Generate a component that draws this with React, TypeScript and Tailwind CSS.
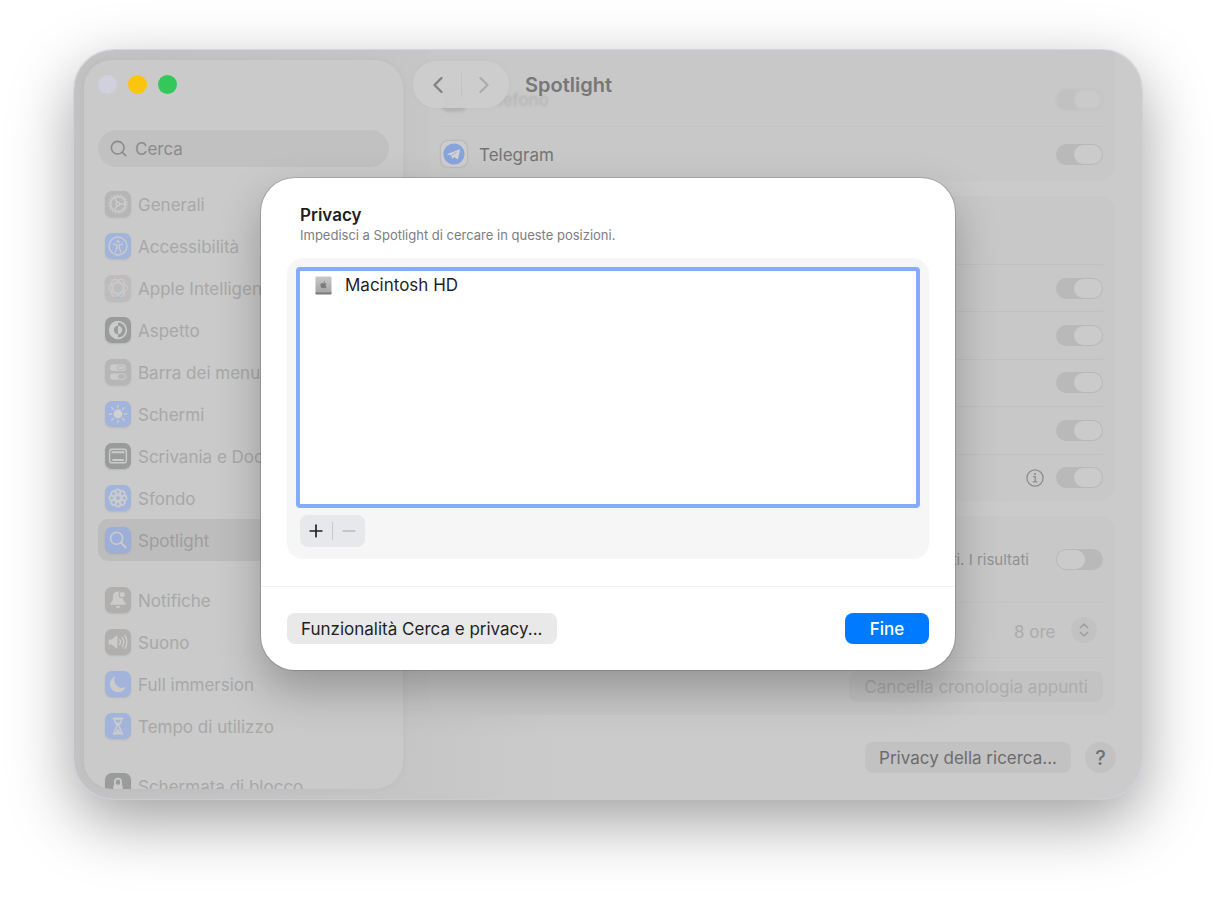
import type { ReactNode } from 'react';
import { ChevronLeft, ChevronRight, ChevronsUpDown, Minus, Plus, Search } from 'lucide-react';

interface SidebarItem {
  label: string;
  tile: string;
  icon: ReactNode;
  selected?: boolean;
}

const GRAY = 'bg-[#b6b6b6]';
const WARM = 'bg-[#b1aeae]';
const BLUE = 'bg-[#a2b4dc]';
const DARK = 'bg-[#9a9c9b]';

function Glyph({ children }: { children: ReactNode }) {
  return (
    <svg viewBox="0 0 26 26" className="h-[26px] w-[26px]" fill="none" stroke="#cbcbcb" strokeWidth="1.4" aria-hidden="true">
      {children}
    </svg>
  );
}

const petals = [0, 45, 90, 135, 180, 225, 270, 315];

const gearIcon = (
  <Glyph>
    <circle cx="13" cy="13" r="7.4" strokeWidth="1.7" />
    <circle cx="13" cy="13" r="9" strokeWidth="1.6" strokeDasharray="1.6 1.54" />
    <circle cx="13" cy="13" r="1.8" />
    <path d="M14.8 13h5.4M12.1 11.4 9.4 6.8M12.1 14.6l-2.7 4.6" />
  </Glyph>
);

const accessibilityIcon = (
  <Glyph>
    <circle cx="13" cy="13" r="9" />
    <circle cx="13" cy="8.4" r="1.5" fill="#cbcbcb" stroke="none" />
    <path d="M8.4 11.1l3.2.8v3.2l-1.5 4M17.6 11.1l-3.2.8v3.2l1.5 4M11.6 12h2.8v3h-2.8z" strokeWidth="1.2" strokeLinecap="round" />
  </Glyph>
);

const intelligenceIcon = (
  <Glyph>
    {[0, 60, 120].map((a) => (
      <ellipse key={a} cx="13" cy="13" rx="9.4" ry="5.2" transform={`rotate(${a} 13 13)`} strokeWidth="1.2" />
    ))}
    <path d="M9 22.4h8" stroke="#a6b6dc" strokeWidth="2" strokeDasharray="1.5 1" />
  </Glyph>
);

const appearanceIcon = (
  <Glyph>
    <circle cx="13" cy="13" r="8.4" strokeWidth="1.6" />
    <path d="M13 4.6a8.4 8.4 0 0 0 0 16.8v-4.2a4.2 4.2 0 0 1 0-8.4z" fill="#cbcbcb" stroke="none" />
    <path d="M13 8.8a4.2 4.2 0 0 1 0 8.4z" fill="#cbcbcb" stroke="none" />
  </Glyph>
);

const menuBarIcon = (
  <Glyph>
    <rect x="5" y="5.6" width="16" height="6.4" rx="3.2" fill="#cbcbcb" stroke="none" />
    <rect x="12.5" y="7" width="7" height="3.6" rx="1.8" fill="none" stroke="#b6b6b6" strokeWidth="1" />
    <rect x="5" y="14.4" width="16" height="6.4" rx="3.2" fill="#cbcbcb" stroke="none" />
    <rect x="13" y="15.4" width="7" height="4.4" rx="2.2" fill="#b6b6b6" stroke="none" />
  </Glyph>
);

const displayIcon = (
  <Glyph>
    <circle cx="13" cy="13" r="4.4" fill="#d0d0d0" stroke="none" />
    {petals.map((a) => (
      <path key={a} d="M13 4.2v2.6" transform={`rotate(${a} 13 13)`} strokeLinecap="round" />
    ))}
  </Glyph>
);

const desktopIcon = (
  <Glyph>
    <rect x="4.6" y="6.2" width="16.8" height="13.6" rx="2.4" />
    <path d="M6.6 9.2h12.8" strokeWidth="2" />
    <path d="M7.4 17h11.2" strokeWidth="2" />
  </Glyph>
);

const wallpaperIcon = (
  <Glyph>
    {petals.map((a) => (
      <circle key={a} cx="13" cy="6.8" r="2.4" transform={`rotate(${a} 13 13)`} strokeWidth="1.8" />
    ))}
    <circle cx="13" cy="13" r="2.6" />
  </Glyph>
);

const spotlightIcon = (
  <Glyph>
    <circle cx="11.6" cy="11.2" r="6" strokeWidth="1.6" />
    <path d="M16 15.6l4.6 4.6" strokeWidth="2" strokeLinecap="round" />
  </Glyph>
);

const bellIcon = (
  <Glyph>
    <path
      d="M13 4.6c-3.4 0-5 2.3-5 5.2 0 3.6-.8 4.8-2.4 6.4-.6.6-.3 1.6.6 1.6h13.6c.9 0 1.2-1 .6-1.6-1.6-1.6-2.4-2.8-2.4-6.4 0-2.9-1.6-5.2-5-5.2z"
      fill="#cbcbcb"
      stroke="none"
    />
    <path d="M10.8 19h4.4a2.2 2 0 0 1-4.4 0z" fill="#cbcbcb" stroke="none" />
    <circle cx="17.2" cy="7.6" r="3.2" fill="#cbcbcb" stroke="#b1aeae" strokeWidth="1.2" />
  </Glyph>
);

const speakerIcon = (
  <Glyph>
    <path d="M3.6 10.4h3.2l4.4-3.6c.6-.5 1.2-.2 1.2.6v11.2c0 .8-.6 1.1-1.2.6l-4.4-3.6H3.6z" fill="#cbcbcb" stroke="none" />
    <path d="M14.6 10.4a4.4 4.4 0 0 1 0 5.2M17.2 8.6a7.4 7.4 0 0 1 0 8.8M19.8 6.8a10.2 10.2 0 0 1 0 12.4" strokeLinecap="round" />
  </Glyph>
);

const moonIcon = (
  <Glyph>
    <path d="M10.6 5.2a8.2 8.2 0 1 0 10.2 10.6 7.6 7.6 0 0 1-10.2-10.6z" fill="#cbcbcb" stroke="none" />
  </Glyph>
);

const hourglassIcon = (
  <Glyph>
    <path d="M8.6 5.4h8.8M8.6 20.6h8.8" strokeWidth="2" strokeLinecap="round" />
    <path d="M9.4 6c0 4 2.6 5 2.6 7s-2.6 3-2.6 7h7.2c0-4-2.6-5-2.6-7s2.6-3 2.6-7z" />
    <path d="M10 9.4h6L13 13zM13 15.6l3 4.4h-6z" fill="#cbcbcb" stroke="none" />
  </Glyph>
);

const lockIcon = (
  <Glyph>
    <path d="M10 12V8.6a3 3 0 0 1 6 0V12" strokeWidth="1.8" />
    <rect x="8.4" y="11.4" width="9.2" height="9" rx="1.6" fill="#cbcbcb" stroke="none" />
  </Glyph>
);

const sections: SidebarItem[][] = [
  [
    { label: 'Generali', tile: GRAY, icon: gearIcon },
    { label: 'Accessibilità', tile: BLUE, icon: accessibilityIcon },
    { label: 'Apple Intelligence', tile: 'bg-[#bebcbc]', icon: intelligenceIcon },
    { label: 'Aspetto', tile: DARK, icon: appearanceIcon },
    { label: 'Barra dei menu', tile: GRAY, icon: menuBarIcon },
    { label: 'Schermi', tile: BLUE, icon: displayIcon },
    { label: 'Scrivania e Dock', tile: DARK, icon: desktopIcon },
    { label: 'Sfondo', tile: BLUE, icon: wallpaperIcon },
    { label: 'Spotlight', tile: 'bg-[#9dafd8]', icon: spotlightIcon, selected: true },
  ],
  [
    { label: 'Notifiche', tile: WARM, icon: bellIcon },
    { label: 'Suono', tile: WARM, icon: speakerIcon },
    { label: 'Full immersion', tile: BLUE, icon: moonIcon },
    { label: 'Tempo di utilizzo', tile: BLUE, icon: hourglassIcon },
  ],
  [{ label: 'Schermata di blocco', tile: DARK, icon: lockIcon }],
];

function Toggle({ label, on = true }: { label: string; on?: boolean }) {
  return (
    <input
      type="checkbox"
      role="switch"
      aria-label={label}
      defaultChecked={on}
      className="h-[21px] w-[47px] shrink-0 appearance-none rounded-full bg-[#b9b9b9] p-px before:block before:h-[19px] before:w-7 before:rounded-full before:bg-[#cbcbcb] checked:before:ml-[17px]"
    />
  );
}

function Sidebar() {
  return (
    <aside className="my-[10px] ml-[10px] flex w-[319px] shrink-0 flex-col overflow-hidden rounded-[28px] bg-[#cacaca] px-[14px] pt-[15px] shadow-[0_0_8px_rgba(0,0,0,0.04)]">
      <div className="flex shrink-0 gap-[11px]">
        <button aria-label="Chiudi" className="h-[19px] w-[19px] rounded-full bg-[#cfd1dc]" />
        <button aria-label="Riduci a icona" className="h-[19px] w-[19px] rounded-full bg-[#fcc50d]" />
        <button aria-label="Ingrandisci" className="h-[19px] w-[19px] rounded-full bg-[#34c759]" />
      </div>
      <label className="mt-9 flex h-[37px] shrink-0 items-center gap-[7px] rounded-full bg-[#c1c1c1] px-[11px]">
        <Search className="h-[19px] w-[19px] text-[#8a8a8a]" strokeWidth={2} />
        <input
          type="search"
          aria-label="Cerca"
          placeholder="Cerca"
          className="min-w-0 flex-1 bg-transparent pt-0.5 text-[17px] outline-none placeholder:text-[#8c8c8c]"
        />
      </label>
      <nav className="mt-4 flex flex-col gap-[18px]">
        {sections.map((items, i) => (
          <ul key={i}>
            {items.map((item) => (
              <li key={item.label}>
                <a
                  href="#"
                  className={`flex h-[42px] items-center gap-[7px] rounded-[10px] px-[7px] text-[17px] ${
                    item.selected ? 'bg-[#bdbdbd] text-[#9d9d9d]' : 'text-[#a8a8a8]'
                  }`}
                >
                  <span className={`shrink-0 overflow-hidden rounded-[7px] shadow-[0_1px_2px_rgba(0,0,0,0.1)] ${item.tile}`}>
                    {item.icon}
                  </span>
                  <span className="pt-[3px] whitespace-nowrap">{item.label}</span>
                </a>
              </li>
            ))}
          </ul>
        ))}
      </nav>
    </aside>
  );
}

function Toolbar() {
  return (
    <header className="absolute inset-x-0 top-0 flex items-center gap-4 pt-[11px] pl-[10px]">
      <div className="flex h-[47px] w-24 items-center justify-between rounded-full bg-[#cdcdcd]/95 px-[11px] shadow-[0_0_6px_rgba(0,0,0,0.03)]">
        <button aria-label="Indietro">
          <ChevronLeft className="h-7 w-7 text-[#808080]" strokeWidth={2} />
        </button>
        <span className="h-[26px] w-px bg-[#c4c4c4]" />
        <button aria-label="Avanti">
          <ChevronRight className="h-7 w-7 text-[#acacac]" strokeWidth={2} />
        </button>
      </div>
      <h1 className="text-xl font-semibold text-[#777]">Spotlight</h1>
    </header>
  );
}

function MainPane() {
  return (
    <main className="relative min-w-0 flex-1 overflow-hidden">
      <div className="flex flex-col gap-[15px] pr-[27px] pl-[26px]">
        <section className="rounded-b-2xl bg-[#c8c8c8] px-3 pt-[22px]">
          <div className="flex h-[54px] items-center gap-3 opacity-50 blur-[1px]">
            <span className="h-[26px] w-[26px] rounded-[7px] bg-[#a4a4a4]" />
            <span className="flex-1 pt-[3px] text-[17px] text-[#999]">Telefono</span>
            <Toggle label="Telefono" />
          </div>
          <div className="flex h-[55px] items-center gap-3 border-t border-[#c3c3c3]">
            <span className="grid h-[26px] w-[26px] place-items-center rounded-[7px] bg-[#cdcdcd] shadow-[0_0_2px_rgba(0,0,0,0.25)]">
              <svg viewBox="0 0 22 22" className="h-[22px] w-[22px]" aria-hidden="true">
                <circle cx="11" cy="11" r="10.6" fill="#88a4dc" />
                <path
                  d="M4.6 11 16 6.5c.6-.2 1 .1.9.8l-1.8 8.4c-.1.6-.6.8-1.1.4l-2.8-2-1.4 1.4c-.3.3-.6.2-.7-.2l-.8-3-3.7-.6c-.4-.2-.4-.5 0-.7z"
                  fill="#d3d3d3"
                />
                <path d="M9 12.2l4.8-3.1" stroke="#88a4dc" strokeWidth=".7" />
              </svg>
            </span>
            <span className="flex-1 pt-[3px] text-[17px] text-[#757575]">Telegram</span>
            <Toggle label="Telegram" />
          </div>
        </section>

        <section className="rounded-2xl bg-[#c8c8c8]">
          <div className="h-[68px]" />
          <div className="grid h-[237px] grid-rows-5">
            {['Applicazioni', 'Documenti', 'Menu', 'Comandi rapidi', 'Sistema'].map((label) => (
              <div key={label} className="mx-3 flex items-center justify-end gap-3 border-t border-[#c1c1c1]">
                {label === 'Sistema' && (
                  <button aria-label="Informazioni">
                    <svg viewBox="0 0 18 18" className="h-[18px] w-[18px]" fill="none" stroke="#8d8d8d" strokeWidth="1.3" aria-hidden="true">
                      <circle cx="9" cy="9" r="8.1" />
                      <path d="M7.2 7.7h2v5M6.8 12.8h4.6" />
                      <circle cx="9" cy="5" r="1.1" fill="#8d8d8d" stroke="none" />
                    </svg>
                  </button>
                )}
                <Toggle label={label} />
              </div>
            ))}
          </div>
        </section>

        <section className="rounded-2xl bg-[#c8c8c8] px-3">
          <div className="flex h-[86px] items-center justify-end gap-[27px]">
            <span className="pt-[3px] text-[15px] text-[#929292]">ti. I risultati</span>
            <Toggle label="Appunti" on={false} />
          </div>
          <div className="flex h-[56px] items-center justify-end border-y border-[#c3c3c3] pr-[6px]">
            <label className="relative flex items-center">
              <select
                aria-label="Conserva la cronologia"
                className="h-[26px] appearance-none bg-transparent pt-[3px] pr-[41px] text-[17px] text-[#acacac] outline-none"
              >
                <option>8 ore</option>
              </select>
              <span className="pointer-events-none absolute right-0 grid h-[26px] w-[26px] place-items-center rounded-full bg-[#c2c2c2]">
                <ChevronsUpDown className="h-[18px] w-[18px] text-[#9f9f9f]" strokeWidth={2} />
              </span>
            </label>
          </div>
          <div className="flex h-[57px] items-center justify-end">
            <button className="h-[31px] rounded-lg bg-[#c3c3c3] px-[15px] pt-0.5 text-[17px] text-[#acacac]">Cancella cronologia appunti</button>
          </div>
        </section>
      </div>
      <footer className="mt-[27px] flex justify-end gap-[14px] pr-[26px]">
        <button className="h-[31px] rounded-lg bg-[#c2c2c2] px-[14px] pt-0.5 text-[17px] text-[#6c6c6c]">Privacy della ricerca...</button>
        <button className="h-[31px] w-[31px] rounded-full bg-[#c2c2c2] text-xl font-medium text-[#707070]">?</button>
      </footer>
      <Toolbar />
    </main>
  );
}

function DriveIcon() {
  return (
    <svg viewBox="0 0 17 19" className="h-[19px] w-[17px]" aria-hidden="true">
      <defs>
        <linearGradient id="drive" x1="0" y1="0" x2="0" y2="1">
          <stop offset="0" stopColor="#c9c9c9" />
          <stop offset="1" stopColor="#a2a2a2" />
        </linearGradient>
      </defs>
      <rect x=".5" y=".5" width="16" height="17.5" rx="1" fill="url(#drive)" />
      <path d="M.5 16.6h16v1a1 1 0 0 1-1 1h-14a1 1 0 0 1-1-1z" fill="#7a7a7a" />
      <path
        d="M8.4 7.4c.7 0 1-.4 1.7-.4.6 0 1 .3 1.3.7-1.1.8-.9 2.3.2 2.8-.3.9-1 1.8-1.6 1.8-.5 0-.8-.3-1.4-.3s-.9.3-1.4.3c-.8 0-1.8-1.6-1.8-3 0-1.5.9-2.3 1.8-2.3.5 0 .8.4 1.2.4zM8.5 6.9c0-1 .7-1.7 1.5-1.8 0 1-.7 1.8-1.5 1.8z"
        fill="#7c7c7c"
      />
    </svg>
  );
}

function PrivacyDialog() {
  return (
    <div className="absolute inset-0 flex items-start justify-center pt-32">
      <div
        role="dialog"
        aria-labelledby="privacy-title"
        className="w-[694px] rounded-[34px] bg-white pt-[26px] shadow-[0_0_0_1px_rgba(0,0,0,0.15),0_20px_44px_rgba(0,0,0,0.26)]"
      >
        <div className="px-[39px]">
          <h2 id="privacy-title" className="text-[17px] leading-[22px] font-semibold text-[#1f1f1f]">
            Privacy
          </h2>
          <p className="text-[13px] leading-[18px] text-[#7d7d82]">Impedisci a Spotlight di cercare in queste posizioni.</p>
        </div>
        <div className="mx-[26px] mt-[14px] rounded-2xl bg-[#f6f6f6] px-[9px] pt-[9px] pb-3">
          <ul className="h-[241px] rounded-[4px] border-4 border-[#86abf8] bg-white">
            <li className="flex h-[29px] items-center gap-[13px] pl-[15px] text-[17px] text-[#1f1f1f]">
              <DriveIcon />
              Macintosh HD
            </li>
          </ul>
          <div className="mt-[7px] ml-1 flex h-8 w-[65px] items-center rounded-lg bg-[#e7e8ec]">
            <button aria-label="Aggiungi" className="grid flex-1 place-items-center">
              <Plus className="h-5 w-5 text-[#1f1f1f]" strokeWidth={2} />
            </button>
            <span className="h-[18px] w-px bg-[#c8c8cc]" />
            <button aria-label="Rimuovi" className="grid flex-1 place-items-center">
              <Minus className="h-5 w-5 text-[#b9b9bd]" strokeWidth={2} />
            </button>
          </div>
        </div>
        <div className="mt-[27px] flex items-center justify-between border-t border-[#f2f2f2] p-[26px]">
          <button className="h-[31px] rounded-lg bg-[#e9e9e9] px-[14px] pt-0.5 text-[17px] text-[#1f1f1f]">
            Funzionalità Cerca e privacy...
          </button>
          <button className="h-[31px] w-[84px] rounded-lg bg-[#007aff] pt-0.5 text-[17px] font-medium text-white">Fine</button>
        </div>
      </div>
    </div>
  );
}

export default function App() {
  return (
    <div className="h-screen bg-white px-[74px] pt-[50px] pb-[98px] font-['Inter',sans-serif] select-none">
      <div className="relative flex h-full overflow-hidden rounded-[40px] bg-linear-to-r from-[#c2c2c2] via-[#c5c5c5] via-30% to-[#cbcbcb] to-45% shadow-[0_0_0_1px_rgba(205,208,222,0.8),0_22px_64px_rgba(0,0,0,0.38)]">
        <Sidebar />
        <MainPane />
        <PrivacyDialog />
      </div>
    </div>
  );
}
